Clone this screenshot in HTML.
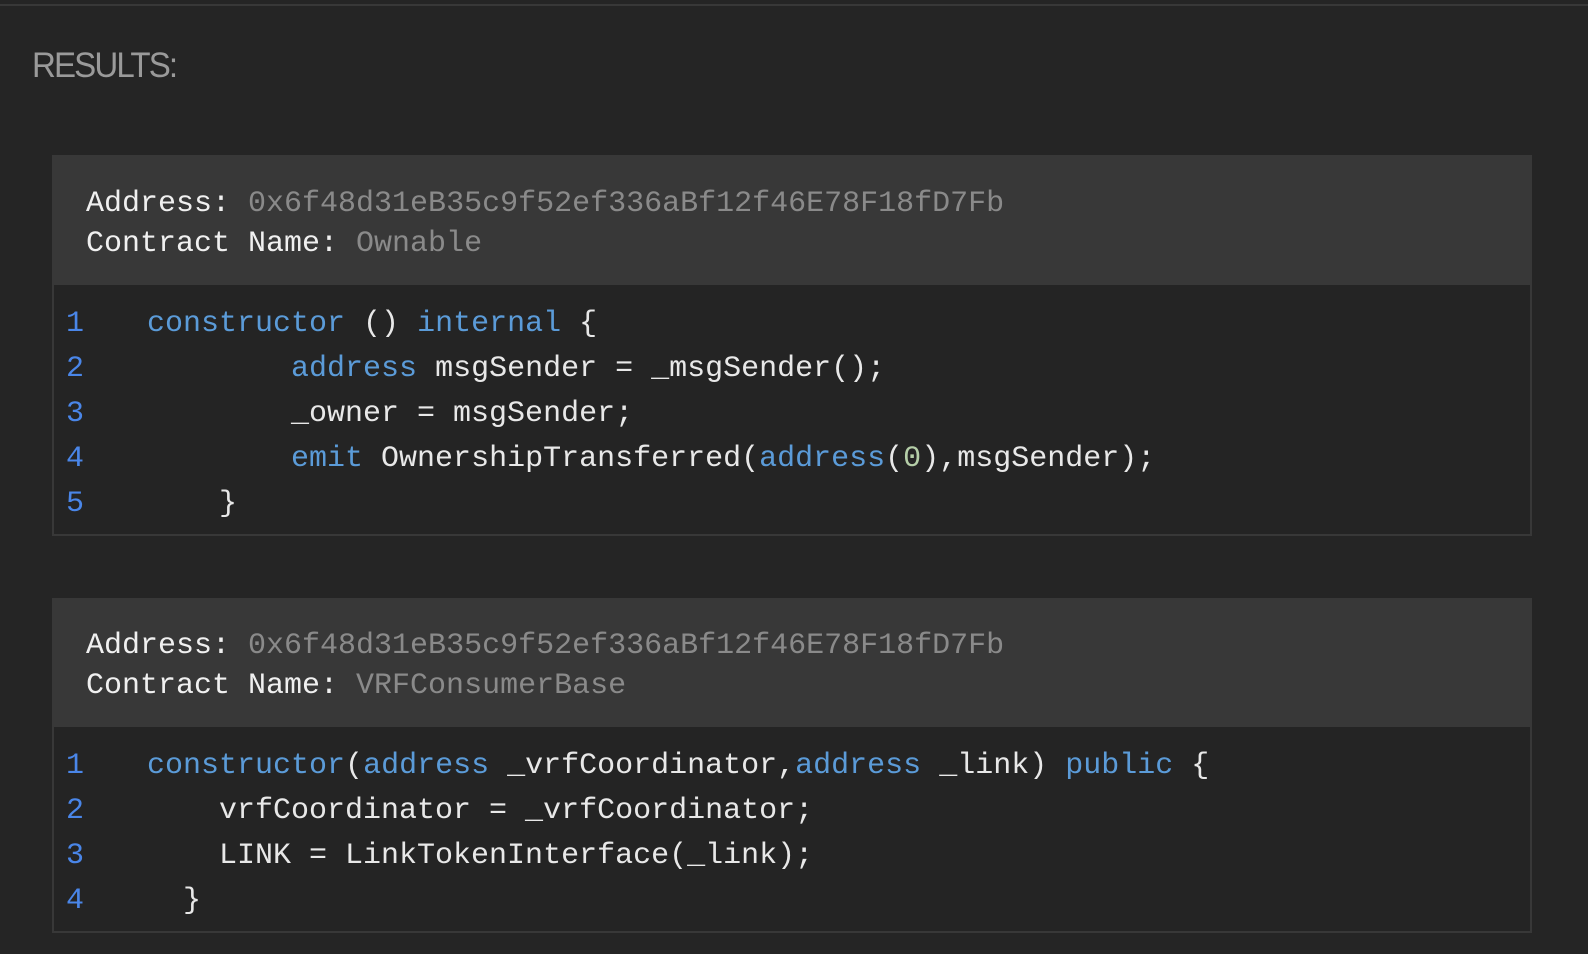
<!DOCTYPE html>
<html><head><meta charset="utf-8"><style>
html,body{margin:0;padding:0;background:#252525;width:1588px;height:954px;overflow:hidden;position:relative}
.topline{position:absolute;left:0;top:4px;width:1588px;height:2px;background:#383838}
.res{position:absolute;left:32px;top:46px;font:35px/40px "Liberation Sans",sans-serif;color:#9a9a9a;letter-spacing:-2px;transform:scaleX(0.945);transform-origin:0 0}
.card{position:absolute;left:52px;width:1480px;background:#383838}
.code{position:absolute;left:2px;right:2px;bottom:2px;background:#242424}
pre{margin:0;position:absolute;font-family:"Liberation Mono",monospace;font-size:30px;white-space:pre}
.hd{line-height:39.5px;color:#f0f0f0}
.ln{line-height:45px;color:#4a86e8}
.cd{line-height:45px;color:#e8e8e8}
.g{color:#8a8a8a}.k{color:#5b9bd8}.n{color:#b5cea8}
</style></head><body>
<div class="topline"></div>
<div class="res">RESULTS:</div>

<div class="card" style="top:155px;height:381px">
  <div class="code" style="top:130px"></div>
</div>
<pre class="hd" style="left:86px;top:185px">Address: <span class="g">0x6f48d31eB35c9f52ef336aBf12f46E78F18fD7Fb</span>
Contract Name: <span class="g">Ownable</span></pre>
<pre class="ln" style="left:66px;top:301.5px">1
2
3
4
5</pre>
<pre class="cd" style="left:147px;top:301.5px"><span class="k">constructor</span> () <span class="k">internal</span> {
        <span class="k">address</span> msgSender = _msgSender();
        _owner = msgSender;
        <span class="k">emit</span> OwnershipTransferred(<span class="k">address</span>(<span class="n">0</span>),msgSender);
    }</pre>

<div class="card" style="top:598px;height:335px">
  <div class="code" style="top:129px"></div>
</div>
<pre class="hd" style="left:86px;top:627px">Address: <span class="g">0x6f48d31eB35c9f52ef336aBf12f46E78F18fD7Fb</span>
Contract Name: <span class="g">VRFConsumerBase</span></pre>
<pre class="ln" style="left:66px;top:743.5px">1
2
3
4</pre>
<pre class="cd" style="left:147px;top:743.5px"><span class="k">constructor</span>(<span class="k">address</span> _vrfCoordinator,<span class="k">address</span> _link) <span class="k">public</span> {
    vrfCoordinator = _vrfCoordinator;
    LINK = LinkTokenInterface(_link);
  }</pre>
</body></html>
